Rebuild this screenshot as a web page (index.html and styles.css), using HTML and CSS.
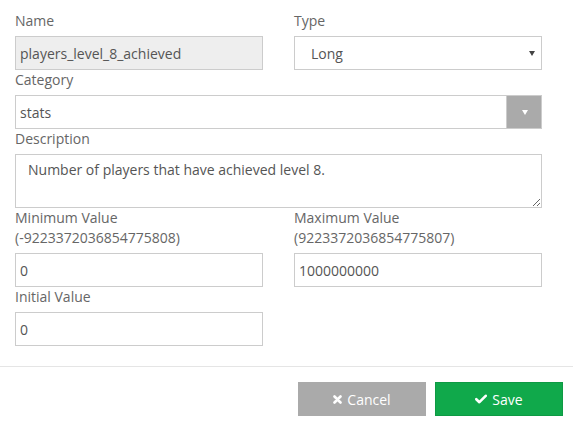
FILE: index.html
```html
<!DOCTYPE html>
<html>
<head>
<meta charset="utf-8">
<link rel="stylesheet" href="styles.css">
</head>
<body>
<div class="dialog">
  <div class="body">
    <div class="row">
      <div class="group">
        <label class="label">Name</label>
        <input class="field readonly" type="text" value="players_level_8_achieved" readonly>
      </div>
      <div class="group">
        <label class="label">Type</label>
        <div class="select">
          <span class="select-text">Long</span>
          <span class="caret dark"></span>
        </div>
      </div>
    </div>
    <div class="group">
      <label class="label">Category</label>
      <div class="combo">
        <span class="combo-text">stats</span>
        <span class="combo-btn"><span class="caret light"></span></span>
      </div>
    </div>
    <div class="group">
      <label class="label">Description</label>
      <textarea class="area">Number of players that have achieved level 8.</textarea>
    </div>
    <div class="row">
      <div class="group">
        <label class="label">Minimum Value<br>(-9223372036854775808)</label>
        <input class="field" type="text" value="0">
      </div>
      <div class="group">
        <label class="label">Maximum Value<br>(9223372036854775807)</label>
        <input class="field" type="text" value="1000000000">
      </div>
    </div>
    <div class="row">
      <div class="group">
        <label class="label">Initial Value</label>
        <input class="field" type="text" value="0">
      </div>
      <div class="group"></div>
    </div>
  </div>
  <div class="footer">
    <button class="btn cancel"><svg class="ico-x" width="9" height="9" viewBox="0 0 9 9"><path d="M1.5 1.5 L7.5 7.5 M7.5 1.5 L1.5 7.5" stroke="#fff" stroke-width="2.6" stroke-linecap="round" fill="none"/></svg>Cancel</button>
    <button class="btn save"><svg class="ico-check" width="12" height="10" viewBox="0 0 12 10"><path d="M1.3 5.2 L4.4 8.2 L10.7 1.8" stroke="#fff" stroke-width="2.6" stroke-linecap="round" stroke-linejoin="round" fill="none"/></svg>Save</button>
  </div>
</div>
</body>
</html>
```

FILE: styles.css
```css
* { box-sizing: border-box; }
html, body { margin: 0; padding: 0; background: #fff; }
body {
  font-family: "Open Sans", "Liberation Sans", sans-serif;
  font-size: 14px;
  color: #555;
  width: 573px;
  height: 425px;
  overflow: hidden;
}
.body {
  padding: 11px 31px 20px 15px;
}
.row {
  display: grid;
  grid-template-columns: 248px 248px;
  column-gap: 31px;
}
.group {
  display: flex;
  flex-direction: column;
}
.label {
  display: block;
  line-height: 20px;
  color: #666;
  margin-bottom: 5px;
}
.field {
  height: 34px;
  border: 1px solid #ccc;
  border-radius: 0;
  padding: 0 4px;
  font-family: inherit;
  font-size: 14px;
  color: #555;
  background: #fff;
  outline: none;
  width: 100%;
}
.field.readonly { background: #eee; }
.select {
  height: 34px;
  border: 1px solid #ccc;
  display: flex;
  align-items: center;
  justify-content: space-between;
  padding: 0 6px 0 16px;
}
.caret {
  width: 0;
  height: 0;
  border-left: 3px solid transparent;
  border-right: 3px solid transparent;
  border-top: 5px solid #444;
}
.caret.light { border-top-color: #fff; }
.combo {
  height: 34px;
  border: 1px solid #ccc;
  display: flex;
  align-items: stretch;
}
.combo-text {
  flex: 1;
  display: flex;
  align-items: center;
  padding-left: 4px;
}
.combo-btn {
  width: 35px;
  background: #aaa;
  border-left: 1px solid #ccc;
  display: flex;
  align-items: center;
  justify-content: center;
  padding-left: 2px;
}
.area {
  height: 54px;
  border: 1px solid #ccc;
  border-radius: 0;
  padding: 5px 12px;
  font-family: inherit;
  font-size: 14px;
  line-height: 20px;
  color: #555;
  resize: vertical;
  outline: none;
  width: 100%;
}
.footer {
  border-top: 1px solid #e5e5e5;
  padding: 15px 10px 0 0;
  display: flex;
  justify-content: flex-end;
  gap: 9px;
}
.btn {
  width: 128px;
  height: 34px;
  border: 1px solid transparent;
  border-radius: 0;
  color: #fff;
  font-family: inherit;
  font-size: 14px;
  display: flex;
  align-items: center;
  justify-content: center;
  padding: 0;
}
.btn svg { margin-right: 5px; }
.cancel { background: #aaa; border-color: #aaa; }
.save { background: #10a94b; border-color: #0e9a44; }
```
